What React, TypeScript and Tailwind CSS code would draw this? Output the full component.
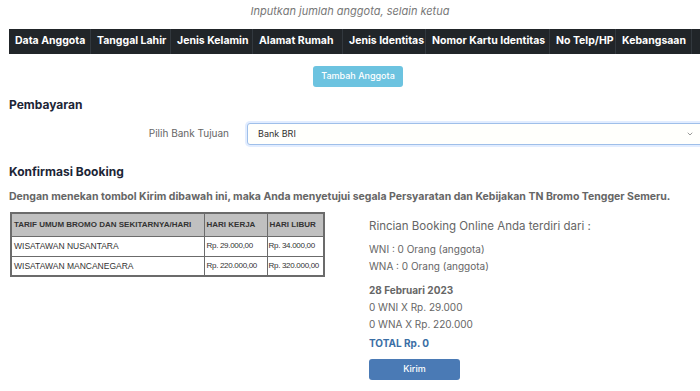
import { ChevronDown } from 'lucide-react'

const cols = [
  { label: 'Data Anggota', w: 'w-[82px]' },
  { label: 'Tanggal Lahir', w: 'w-[80px]' },
  { label: 'Jenis Kelamin', w: 'w-[82px]' },
  { label: 'Alamat Rumah', w: 'w-[90px]' },
  { label: 'Jenis Identitas', w: 'w-[83px]' },
  { label: 'Nomor Kartu Identitas', w: 'w-[124px]' },
  { label: 'No Telp/HP', w: 'w-[66px]' },
  { label: 'Kebangsaan', w: 'w-[76px]' },
]

const tarif = [
  { nama: 'WISATAWAN NUSANTARA', kerja: 'Rp. 29.000,00', libur: 'Rp. 34.000,00' },
  { nama: 'WISATAWAN MANCANEGARA', kerja: 'Rp. 220.000,00', libur: 'Rp. 320.000,00' },
]

export default function App() {
  return (
    <div className="min-h-screen overflow-hidden bg-white font-['Inter',sans-serif] text-[#555]">
      <p className="pt-[3px] text-center text-[11px] italic text-[#777]">Inputkan jumlah anggota, selain ketua</p>

      <div className="ml-[9px] mt-[9px] flex h-[25px] w-[760px] bg-[#212529] text-[10.5px] font-bold text-white">
        {cols.map(c => (
          <div key={c.label} className={`${c.w} flex shrink-0 items-center whitespace-nowrap border-r border-[#32383e] pl-[6px]`}>{c.label}</div>
        ))}
        <div className="flex-1" />
      </div>

      <div className="mt-[12px] flex justify-center pl-[16px]">
        <button className="h-[21px] rounded-[3px] bg-[#6cc3e0] px-[8px] text-[9px] font-medium text-white">Tambah Anggota</button>
      </div>

      <div className="px-[9px]">
        <h2 className="mt-[9px] text-[12px] font-bold text-[#1c2536]">Pembayaran</h2>

        <div className="mr-[-20px] mt-[9px] flex items-center">
          <label className="w-[238px] shrink-0 pr-[18px] text-right text-[10px] text-[#666]">Pilih Bank Tujuan</label>
          <div className="flex h-[22px] flex-1 items-center justify-between rounded-l-[3px] border border-[#9fbfe9] bg-[#fffffc] pl-[10px] pr-[16px] shadow-[0_0_0_2px_rgba(13,110,253,0.12)]">
            <span className="text-[9px] text-[#333]">Bank BRI</span>
            <ChevronDown className="h-[8px] w-[8px] text-[#666]" />
          </div>
        </div>

        <h2 className="mt-[18px] text-[12px] font-bold text-[#1c2536]">Konfirmasi Booking</h2>

        <p className="mt-[8px] text-[10.5px] font-bold text-[#666]">Dengan menekan tombol Kirim dibawah ini, maka Anda menyetujui segala Persyaratan dan Kebijakan TN Bromo Tengger Semeru.</p>

        <div className="mt-[8px] flex">
          <table className="ml-[1px] h-fit w-[313px] table-fixed border-collapse border-2 border-[#6b6b6b] font-['Liberation_Sans',sans-serif] text-[8px] text-[#333]">
            <colgroup>
              <col className="w-[193px]" />
              <col className="w-[63px]" />
              <col className="w-[57px]" />
            </colgroup>
            <thead>
              <tr className="h-[23px] bg-[#c0c0c0] text-left">
                <th className="whitespace-nowrap border border-[#6b6b6b] px-[2px] font-bold">TARIF UMUM BROMO DAN SEKITARNYA/HARI</th>
                <th className="whitespace-nowrap border border-[#6b6b6b] px-[2px] font-bold">HARI KERJA</th>
                <th className="whitespace-nowrap border border-[#6b6b6b] px-[2px] font-bold">HARI LIBUR</th>
              </tr>
            </thead>
            <tbody>
              {tarif.map(t => (
                <tr key={t.nama} className="h-[20px]">
                  <td className="whitespace-nowrap border border-[#6b6b6b] px-[2px] text-[8.5px]">{t.nama}</td>
                  <td className="whitespace-nowrap border border-[#6b6b6b] px-[2px] tracking-[-0.3px]">{t.kerja}</td>
                  <td className="whitespace-nowrap border border-[#6b6b6b] px-[1px] tracking-[-0.3px]">{t.libur}</td>
                </tr>
              ))}
            </tbody>
          </table>

          <div className="ml-[44px] pt-[6px]">
            <p className="text-[11.5px] text-[#666]">Rincian Booking Online Anda terdiri dari :</p>
            <div className="mt-[5px] text-[10px] leading-[17px] text-[#666]">
              <p>WNI : 0 Orang (anggota)</p>
              <p>WNA : 0 Orang (anggota)</p>
            </div>
            <p className="mt-[7px] text-[10px] font-bold leading-[17px] text-[#666]">28 Februari 2023</p>
            <div className="text-[10px] leading-[17px] text-[#666]">
              <p>0 WNI X Rp. 29.000</p>
              <p>0 WNA X Rp. 220.000</p>
            </div>
            <p className="mt-[3px] text-[10px] font-bold text-[#3a6ea5]">TOTAL Rp. 0</p>
            <button className="mt-[8px] h-[21px] w-[91px] rounded-[3px] bg-[#4a7ab5] text-[9px] font-medium text-white">Kirim</button>
          </div>
        </div>
      </div>
    </div>
  )
}
